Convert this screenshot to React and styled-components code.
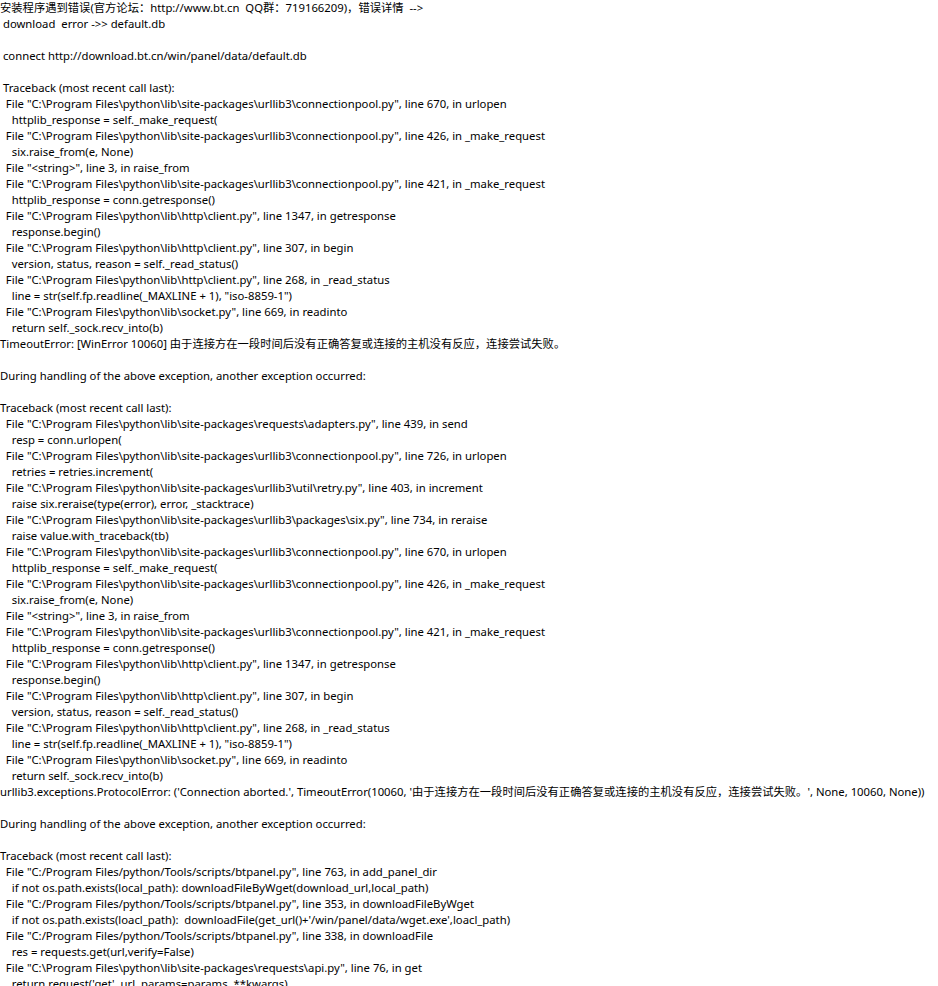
import React from "react";
import styled, { createGlobalStyle } from "styled-components";

const GlobalStyle = createGlobalStyle`
  html, body {
    margin: 0;
    padding: 0;
    background: #ffffff;
  }
`;

const Log = styled.div`
  display: flex;
  flex-direction: column;
  font-family: "Noto Sans", "Noto Sans CJK SC", sans-serif;
  font-size: 11.3px;
  color: #000000;
  background: #ffffff;
`;

const Line = styled.div`
  height: 16px;
  line-height: 16px;
  white-space: pre;
`;

const lines = [
  "安装程序遇到错误(官方论坛：http://www.bt.cn  QQ群：719166209)，错误详情  -->",
  " download  error ->> default.db",
  "",
  " connect http://download.bt.cn/win/panel/data/default.db",
  "",
  " Traceback (most recent call last):",
  '  File "C:\\Program Files\\python\\lib\\site-packages\\urllib3\\connectionpool.py", line 670, in urlopen',
  "    httplib_response = self._make_request(",
  '  File "C:\\Program Files\\python\\lib\\site-packages\\urllib3\\connectionpool.py", line 426, in _make_request',
  "    six.raise_from(e, None)",
  '  File "<string>", line 3, in raise_from',
  '  File "C:\\Program Files\\python\\lib\\site-packages\\urllib3\\connectionpool.py", line 421, in _make_request',
  "    httplib_response = conn.getresponse()",
  '  File "C:\\Program Files\\python\\lib\\http\\client.py", line 1347, in getresponse',
  "    response.begin()",
  '  File "C:\\Program Files\\python\\lib\\http\\client.py", line 307, in begin',
  "    version, status, reason = self._read_status()",
  '  File "C:\\Program Files\\python\\lib\\http\\client.py", line 268, in _read_status',
  '    line = str(self.fp.readline(_MAXLINE + 1), "iso-8859-1")',
  '  File "C:\\Program Files\\python\\lib\\socket.py", line 669, in readinto',
  "    return self._sock.recv_into(b)",
  "TimeoutError: [WinError 10060] 由于连接方在一段时间后没有正确答复或连接的主机没有反应，连接尝试失败。",
  "",
  "During handling of the above exception, another exception occurred:",
  "",
  "Traceback (most recent call last):",
  '  File "C:\\Program Files\\python\\lib\\site-packages\\requests\\adapters.py", line 439, in send',
  "    resp = conn.urlopen(",
  '  File "C:\\Program Files\\python\\lib\\site-packages\\urllib3\\connectionpool.py", line 726, in urlopen',
  "    retries = retries.increment(",
  '  File "C:\\Program Files\\python\\lib\\site-packages\\urllib3\\util\\retry.py", line 403, in increment',
  "    raise six.reraise(type(error), error, _stacktrace)",
  '  File "C:\\Program Files\\python\\lib\\site-packages\\urllib3\\packages\\six.py", line 734, in reraise',
  "    raise value.with_traceback(tb)",
  '  File "C:\\Program Files\\python\\lib\\site-packages\\urllib3\\connectionpool.py", line 670, in urlopen',
  "    httplib_response = self._make_request(",
  '  File "C:\\Program Files\\python\\lib\\site-packages\\urllib3\\connectionpool.py", line 426, in _make_request',
  "    six.raise_from(e, None)",
  '  File "<string>", line 3, in raise_from',
  '  File "C:\\Program Files\\python\\lib\\site-packages\\urllib3\\connectionpool.py", line 421, in _make_request',
  "    httplib_response = conn.getresponse()",
  '  File "C:\\Program Files\\python\\lib\\http\\client.py", line 1347, in getresponse',
  "    response.begin()",
  '  File "C:\\Program Files\\python\\lib\\http\\client.py", line 307, in begin',
  "    version, status, reason = self._read_status()",
  '  File "C:\\Program Files\\python\\lib\\http\\client.py", line 268, in _read_status',
  '    line = str(self.fp.readline(_MAXLINE + 1), "iso-8859-1")',
  '  File "C:\\Program Files\\python\\lib\\socket.py", line 669, in readinto',
  "    return self._sock.recv_into(b)",
  "urllib3.exceptions.ProtocolError: ('Connection aborted.', TimeoutError(10060, '由于连接方在一段时间后没有正确答复或连接的主机没有反应，连接尝试失败。', None, 10060, None))",
  "",
  "During handling of the above exception, another exception occurred:",
  "",
  "Traceback (most recent call last):",
  '  File "C:/Program Files/python/Tools/scripts/btpanel.py", line 763, in add_panel_dir',
  "    if not os.path.exists(local_path): downloadFileByWget(download_url,local_path)",
  '  File "C:/Program Files/python/Tools/scripts/btpanel.py", line 353, in downloadFileByWget',
  "    if not os.path.exists(loacl_path):  downloadFile(get_url()+'/win/panel/data/wget.exe',loacl_path)",
  '  File "C:/Program Files/python/Tools/scripts/btpanel.py", line 338, in downloadFile',
  "    res = requests.get(url,verify=False)",
  '  File "C:\\Program Files\\python\\lib\\site-packages\\requests\\api.py", line 76, in get',
  "    return request('get', url, params=params, **kwargs)",
];

export default function App() {
  return (
    <>
      <GlobalStyle />
      <Log>
        {lines.map((text, i) => (
          <Line key={i}>{text}</Line>
        ))}
      </Log>
    </>
  );
}
